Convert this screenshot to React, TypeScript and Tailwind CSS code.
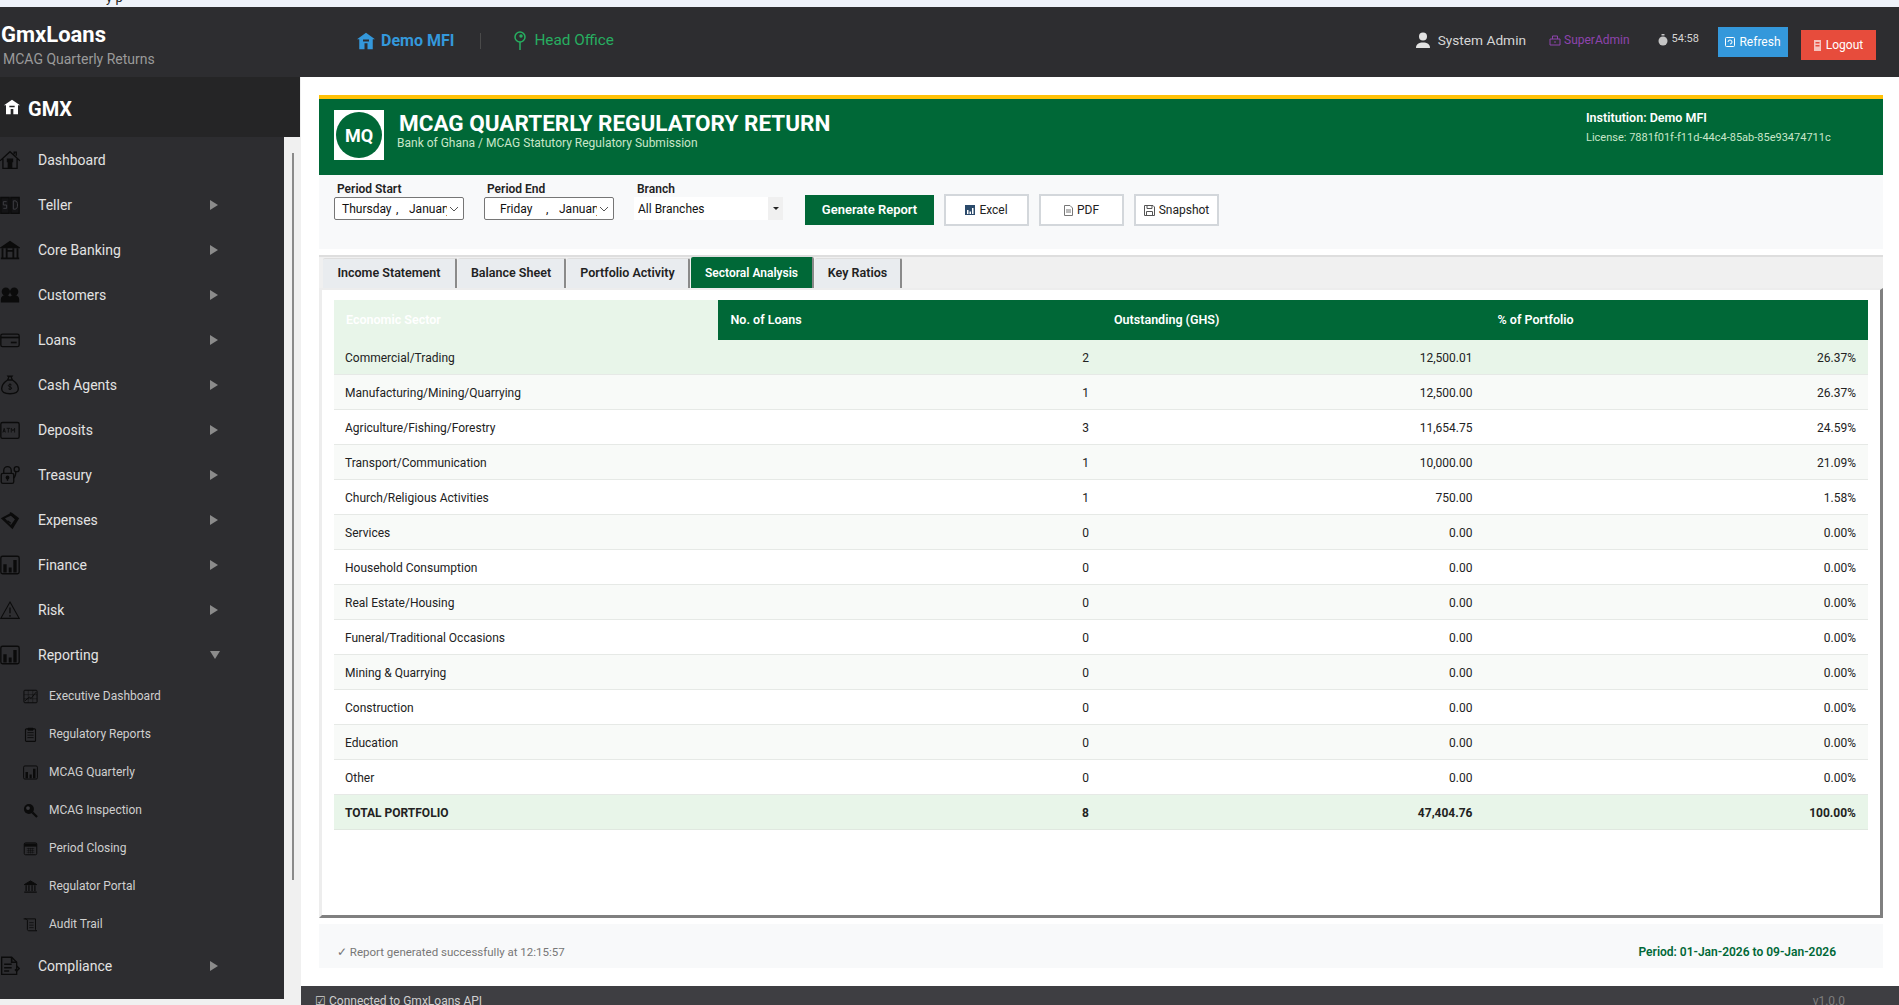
import type { ReactNode } from "react";

const ink = "#0b0b0b";

function Glyph({ size, children, className = "" }: { size: number; children: ReactNode; className?: string }) {
  return (
    <svg width={size} height={size} viewBox="0 0 24 24" fill="none" stroke={ink} strokeWidth="1.6" className={`shrink-0 ${className}`}>
      {children}
    </svg>
  );
}

const barChart = (
  <>
    <rect x="1" y="1.5" width="22" height="21" rx="2" />
    <path d="M4 21V11h4v10zM10.5 21v-6h3.5v6zM16 21V6h4v15z" fill={ink} stroke="none" />
  </>
);

const housePath = "M12 1 0 9.500H3V23h18V9.500h3zM8 10h8v2.500H8zM10 15h4v8h-4z";

const icons: Record<string, ReactNode> = {
  home: (
    <>
      <path d="M0 13 12 2l12 11M3.5 10.5V22h17V10.5M17 5V2.5h2.5V7" />
      <path d="M10 22v-7h4v7M9 11h6v3H9z" fill={ink} />
    </>
  ),
  teller: (
    <>
      <path d="M1 3h10v19H1zM13 3h10v19H13z" fill="#141416" />
      <path d="M8 8H4v4h4v4H4M16 7h2c2 0 3 2 3 5s-1 5-3 5h-2z" stroke="#3c3c40" strokeWidth="1.2" />
    </>
  ),
  bank: (
    <>
      <path d="M1.5 9 12 2l10.5 7z" fill={ink} />
      <path d="M3 10v11M21 10v11M8 10v11M16 10v11M1 22h22M8 13h8" strokeWidth="2.2" />
    </>
  ),
  users: (
    <>
      <circle cx="7" cy="8" r="5" fill={ink} stroke="none" />
      <circle cx="17" cy="8" r="5" fill={ink} stroke="none" />
      <path d="M1 21v-4c0-3 2.5-5 6-5 2 0 4 .8 5 2 1-1.2 3-2 5-2 3.500 0 6 2 6 5v4z" fill={ink} stroke="none" />
    </>
  ),
  card: (
    <>
      <rect x="1" y="5" width="22" height="15" rx="2" />
      <path d="M1 9h22" strokeWidth="2" />
      <path d="M13 15h7" strokeWidth="2" />
    </>
  ),
  money: (
    <>
      <path d="M9 6h6l-1.500-3 1-1.500h-5l1 1.500zM9 6C3 10 2 14 2 16.500 2 20.500 6 22.500 12 22.500s10-2 10-6c0-2.500-1-6.500-7-10.500z" />
      <path d="M12 10v8M14 12c-1-1-4-1-4 .8s4 1 4 3-3 1.500-4 .7" strokeWidth="1.1" />
    </>
  ),
  atm: (
    <>
      <rect x="1" y="3" width="22" height="19" rx="2" />
      <path d="M3.500 15 5 10l1.500 5M4 13.500h2M8 10h4M10 10v5M13.500 15v-5l2 3 2-3v5" strokeWidth="1" />
    </>
  ),
  lockKey: (
    <>
      <rect x="1.500" y="10" width="15" height="12" rx="2" />
      <path d="M4.500 10V6.500a4.500 4.500 0 0 1 9 0V10" />
      <circle cx="9" cy="15" r="1.500" fill={ink} />
      <path d="M9 15v4" />
      <circle cx="20" cy="5" r="3" />
      <path d="M19 8c0 4-.5 6-3 8" />
    </>
  ),
  tag: (
    <>
      <path d="M1 10 14 3l9 7-8 13z" fill={ink} stroke="none" />
      <path d="M6 10l7-3 5 4-5 7z" fill="#2d2d30" stroke="none" />
      <path d="M12 3l8 9M9 13l4 3" stroke="#0b0b0b" strokeWidth="1.400" />
    </>
  ),
  chart: barChart,
  warn: (
    <>
      <path d="M12 2.500 23 22H1z" strokeWidth="1.300" />
      <path d="M12 9v7M12 18v2" strokeWidth="1.600" />
    </>
  ),
  trend: (
    <>
      <rect x="1.500" y="2" width="21" height="20" rx="1.500" />
      <path d="M1.500 9h21M1.500 15.500h21M8.500 2v20M15.500 2v20" strokeWidth="0.7" />
      <path d="M3 19 10 13l3 2 8-10" strokeWidth="1.500" />
    </>
  ),
  clipboard: (
    <>
      <rect x="4" y="3" width="16" height="20" rx="1.500" strokeWidth="1.800" />
      <path d="M8 2h8v3H8z" fill={ink} />
      <path d="M7 9h10M7 13h10M7 17h10" strokeWidth="1.400" />
    </>
  ),
  search: (
    <>
      <circle cx="9.500" cy="9.500" r="8" fill={ink} stroke="none" />
      <circle cx="8" cy="8" r="3" fill="#3a3a3e" stroke="none" />
      <path d="M15 15l7.500 7.500" strokeWidth="3.500" />
    </>
  ),
  calendar: (
    <>
      <rect x="2" y="3" width="20" height="19" rx="2" />
      <path d="M2 4h20v5H2z" fill={ink} stroke="none" />
      <path d="M6 12h12M6 15h12M6 18h12M9 11v9M12 11v9M15 11v9" strokeWidth="0.8" />
    </>
  ),
  temple: (
    <>
      <path d="M2 9 12 3l10 6z" fill={ink} />
      <path d="M5 10v9M9.500 10v9M14.500 10v9M19 10v9M2 21h20" strokeWidth="2" />
    </>
  ),
  scroll: (
    <>
      <path d="M1 3h4l2 2v15c0 1 1 2 2 2h13c-1 0-2-1-2-2V3H3" />
      <path d="M10 9h7M10 13h7M10 17h7" strokeWidth="1.200" />
    </>
  ),
  doc: (
    <>
      <path d="M2 1.500h12l6 6V22H2z" />
      <path d="M5 10h9M5 14h9M5 18h6" strokeWidth="1.800" />
      <path d="M14 1.500v6h6M20 12l3 3-3 3-2-2" strokeWidth="2" />
    </>
  ),
};

const navItems = [
  { label: "Dashboard", icon: "home" },
  { label: "Teller", icon: "teller", arrow: true },
  { label: "Core Banking", icon: "bank", arrow: true },
  { label: "Customers", icon: "users", arrow: true },
  { label: "Loans", icon: "card", arrow: true },
  { label: "Cash Agents", icon: "money", arrow: true },
  { label: "Deposits", icon: "atm", arrow: true },
  { label: "Treasury", icon: "lockKey", arrow: true },
  { label: "Expenses", icon: "tag", arrow: true },
  { label: "Finance", icon: "chart", arrow: true },
  { label: "Risk", icon: "warn", arrow: true },
];

const reportingLinks = [
  { label: "Executive Dashboard", icon: "trend" },
  { label: "Regulatory Reports", icon: "clipboard" },
  { label: "MCAG Quarterly", icon: "chart" },
  { label: "MCAG Inspection", icon: "search" },
  { label: "Period Closing", icon: "calendar" },
  { label: "Regulator Portal", icon: "temple" },
  { label: "Audit Trail", icon: "scroll" },
];

const sectors = [
  ["Commercial/Trading", "2", "12,500.01", "26.37%"],
  ["Manufacturing/Mining/Quarrying", "1", "12,500.00", "26.37%"],
  ["Agriculture/Fishing/Forestry", "3", "11,654.75", "24.59%"],
  ["Transport/Communication", "1", "10,000.00", "21.09%"],
  ["Church/Religious Activities", "1", "750.00", "1.58%"],
  ["Services", "0", "0.00", "0.00%"],
  ["Household Consumption", "0", "0.00", "0.00%"],
  ["Real Estate/Housing", "0", "0.00", "0.00%"],
  ["Funeral/Traditional Occasions", "0", "0.00", "0.00%"],
  ["Mining & Quarrying", "0", "0.00", "0.00%"],
  ["Construction", "0", "0.00", "0.00%"],
  ["Education", "0", "0.00", "0.00%"],
  ["Other", "0", "0.00", "0.00%"],
];

const tabs = [
  { label: "Income Statement", width: "w-[134px]" },
  { label: "Balance Sheet", width: "w-[108px]" },
  { label: "Portfolio Activity", width: "w-[123px]" },
  { label: "Sectoral Analysis", width: "w-[123px]", active: true },
  { label: "Key Ratios", width: "w-[87px]" },
];

function NavRow({ label, icon, arrow, down }: { label: string; icon: string; arrow?: boolean; down?: boolean }) {
  return (
    <div className="flex h-[45px] items-center">
      <Glyph size={20}>{icons[icon]}</Glyph>
      <span className="ml-[18px] mt-[2px] w-[172px] text-[14px] text-[#e3e3e3]">{label}</span>
      {arrow && <span className="block h-0 w-0 border-y-[5px] border-l-[8px] border-y-transparent border-l-[#8b8b8b]" />}
      {down && <span className="block h-0 w-0 border-x-[5px] border-t-[8px] border-x-transparent border-t-[#8b8b8b]" />}
    </div>
  );
}

function DateBox({ day, indent }: { day: string; indent: string }) {
  return (
    <div className="flex h-[23px] w-[130px] items-center rounded-[2px] border border-[#767676] bg-white pl-[7px] text-[12px] text-[#111]">
      <span className={`w-[54px] ${indent}`}>{day}</span>
      <span className="w-[13px]">,</span>
      <span className="w-[38px] overflow-hidden whitespace-nowrap">January</span>
      <svg width="10" height="10" viewBox="0 0 10 10" fill="none" stroke="#555" className="ml-[2px]">
        <path d="M1 3l4 4 4-4" />
      </svg>
    </div>
  );
}

function OutlineButton({ label, width, children }: { label: string; width: string; children: ReactNode }) {
  return (
    <button className={`flex h-[32px] ${width} items-center justify-center gap-[4px] border-2 border-[#d3d7db] bg-white text-[12px] text-[#222]`}>
      {children}
      {label}
    </button>
  );
}

export default function App() {
  return (
    <div className="flex h-[1005px] w-[1899px] flex-col overflow-hidden bg-white font-['Roboto','Noto_Sans',sans-serif]">
      {/* clipped page text above the app */}
      <div className="h-[7px] overflow-hidden bg-[#eef2f9] pl-[106px] text-[13px] leading-[13px]">
        <div className="-mt-[9px] text-[#222]">y p</div>
      </div>

      <header className="flex h-[70px] bg-[#2d2d30]">
        <div className="w-[345px] pl-[1px] pt-[13px]">
          <div className="text-[22px] font-bold leading-[30px] text-white">GmxLoans</div>
          <div className="pl-[2px] text-[14px] leading-[18px] text-[#9a9a9a]">MCAG Quarterly Returns</div>
        </div>
        <div className="flex h-[67px] items-center">
          <svg width="18" height="18" viewBox="0 0 24 24" fill="#3498db" fillRule="evenodd" className="ml-[12px]">
            <path d={housePath} />
          </svg>
          <span className="ml-[6px] text-[16px] font-bold text-[#3498db]">Demo MFI</span>
          <span className="ml-[26px] h-[16px] w-px bg-[#4a4a4a]" />
          <svg width="16" height="20" viewBox="0 0 16 20" fill="none" stroke="#27ae60" strokeWidth="1.500" className="ml-[31px]">
            <circle cx="8" cy="6" r="5" />
            <circle cx="9" cy="5" r="1" fill="#27ae60" />
            <path d="M8 11v8" />
          </svg>
          <span className="ml-[6px] text-[15.300px] text-[#27ae60]">Head Office</span>
        </div>
        <div className="ml-auto flex pr-[23px]">
          <div className="flex h-[66px] items-center text-[13.700px] text-[#d6d6d6]">
            <svg width="14" height="16" viewBox="0 0 14 16" fill="#e2e2e2">
              <circle cx="7" cy="4.500" r="4" />
              <path d="M0 16c0-4 3-5.500 7-5.500s7 1.500 7 5.500z" />
            </svg>
            <span className="ml-[8px]">System Admin</span>
          </div>
          <div className="ml-[23px] flex h-[65px] items-center text-[12px] text-[#8e44ad]">
            <svg width="12" height="12" viewBox="0 0 12 12" fill="none" stroke="#8e44ad" className="mr-[3px]">
              <path d="M1 5h10v6H1zM3.500 5V2h5v3M6 7v2" />
            </svg>
            SuperAdmin
          </div>
          <div className="ml-[28px] flex h-[65px] items-center text-[11px] text-[#d6d6d6]">
            <svg width="10" height="12" viewBox="0 0 10 12" fill="#c4c4c4" className="mr-[4px]">
              <path d="M3.500 0h3v1.500h-3z" />
              <circle cx="5" cy="7" r="4.500" />
            </svg>
            54:58
          </div>
          <button className="ml-[19px] mt-[20px] flex h-[30px] w-[70px] items-center justify-center gap-[4px] bg-[#3498db] text-[12px] text-white">
            <svg width="10" height="10" viewBox="0 0 10 10" fill="none" stroke="white">
              <rect x="0.500" y="0.500" width="9" height="9" rx="1" />
              <path d="M3 5a2 2 0 1 1 2 2" />
            </svg>
            Refresh
          </button>
          <button className="ml-[13px] mt-[23px] flex h-[30px] w-[75px] items-center justify-center gap-[5px] bg-[#e74c3c] text-[12px] text-white">
            <svg width="7" height="11" viewBox="0 0 7 11" fill="#f6c2bc">
              <path d="M0 0h7v11H0zM1.500 2v1.500h4V2zM1.500 5v1.500h4V5z" fillRule="evenodd" />
            </svg>
            Logout
          </button>
        </div>
      </header>

      <div className="flex min-h-0 flex-1">
        <aside className="flex w-[300px] shrink-0 flex-col bg-[#f0f0f0]">
          <div className="flex h-[60px] shrink-0 items-center bg-[#252526] pl-[4px]">
            <svg width="16" height="16" viewBox="0 0 24 24" fill="white" fillRule="evenodd">
              <path d={housePath} />
            </svg>
            <span className="ml-[8px] mt-[3px] text-[20px] font-bold text-white">GMX</span>
          </div>
          <div className="flex h-[862px] shrink-0">
            <nav className="w-[284px] bg-[#2d2d30]">
              {navItems.map((item) => (
                <NavRow key={item.label} {...item} />
              ))}
              <NavRow label="Reporting" icon="chart" down />
              {reportingLinks.map((link) => (
                <div key={link.label} className="flex h-[38px] items-center pl-[23px]">
                  <Glyph size={15}>{icons[link.icon]}</Glyph>
                  <span className="ml-[11px] text-[12px] text-[#cfcfcf]">{link.label}</span>
                </div>
              ))}
              <NavRow label="Compliance" icon="doc" arrow />
            </nav>
            <div className="w-[16px] pl-[8px] pt-[16px]">
              <div className="h-[727px] w-[2px] bg-[#8a8a8a]" />
            </div>
          </div>
        </aside>

        <main className="flex min-w-0 flex-1 flex-col border-l border-[#f0f0f0] bg-white">
          <div className="flex-1 pl-[18px] pr-[16px] pt-[18px]">
            <section className="flex h-[80px] items-start border-t-4 border-[#ffc107] bg-[#006837] text-white">
              <div className="ml-[15px] mt-[11px] flex h-[50px] w-[50px] items-center justify-center bg-white">
                <div className="flex h-[46px] w-[46px] items-center justify-center rounded-full bg-[#006837] text-[18px] font-bold">MQ</div>
              </div>
              <div className="ml-[13px] mt-[12px]">
                <h1 className="ml-[2px] text-[22.500px] font-bold leading-[25px]">MCAG QUARTERLY REGULATORY RETURN</h1>
                <p className="text-[12px] leading-[14px] text-[#c8e6c9]">Bank of Ghana / MCAG Statutory Regulatory Submission</p>
              </div>
              <div className="ml-auto mr-[52px] mt-[10px] w-[245px]">
                <p className="text-[12.500px] font-semibold leading-[18px]">Institution: Demo MFI</p>
                <p className="mt-[3px] whitespace-nowrap text-[11px] leading-[16px] text-[#c8e6c9]">License: 7881f01f-f11d-44c4-85ab-85e93474711c</p>
              </div>
            </section>

            <section className="flex h-[74px] bg-[#f8f9fa] pl-[15px]">
              <div className="pt-[7px]">
                <label className="block pl-[3px] text-[12px] font-semibold leading-[15px] text-[#222]">Period Start</label>
                <DateBox day="Thursday" indent="" />
              </div>
              <div className="ml-[20px] pt-[7px]">
                <label className="block pl-[3px] text-[12px] font-semibold leading-[15px] text-[#222]">Period End</label>
                <DateBox day="Friday" indent="pl-[8px]" />
              </div>
              <div className="ml-[20px] pt-[7px]">
                <label className="block pl-[3px] text-[12px] font-semibold leading-[15px] text-[#222]">Branch</label>
                <div className="flex h-[23px] w-[149px] items-center bg-white pl-[4px] text-[12px] text-[#111]">
                  All Branches
                  <span className="ml-auto flex h-full w-[15px] items-center justify-center bg-[#f0f0f0]">
                    <span className="block h-0 w-0 border-x-[3px] border-t-[3px] border-x-transparent border-t-[#222]" />
                  </span>
                </div>
              </div>
              <div className="ml-[22px] flex gap-[10px] pt-[19px]">
                <button className="mt-px h-[30px] w-[129px] bg-[#006837] text-[13px] font-semibold text-white">Generate Report</button>
                <OutlineButton label="Excel" width="w-[85px]">
                  <svg width="10" height="10" viewBox="0 0 10 10" fill="#2b4a6b">
                    <path d="M0 0h10v10H0zM2 5v4h1.500V5zM4.500 6.500V9H6V6.500zM7 3v6h1.500V3z" fillRule="evenodd" />
                  </svg>
                </OutlineButton>
                <OutlineButton label="PDF" width="w-[85px]">
                  <svg width="9" height="11" viewBox="0 0 9 11" fill="none" stroke="#777">
                    <path d="M.5.5h5.500l2.500 2.500v7.500h-8zM2 5h5M2 7h5" />
                  </svg>
                </OutlineButton>
                <OutlineButton label="Snapshot" width="w-[85px]">
                  <svg width="11" height="11" viewBox="0 0 11 11" fill="none" stroke="#555">
                    <path d="M.5.5h8.500l1.500 1.500v8.500H.5zM3 .5v3h5v-3M2.500 10.500V6.500h6v4" />
                  </svg>
                </OutlineButton>
              </div>
            </section>

            <section className="mt-[6px] flex h-[663px] flex-col">
              <div className="flex h-[33px] shrink-0 items-end gap-px border-t-2 border-[#dedede] bg-[#f0f0f0] pl-[4px]">
                {tabs.map((tab) => (
                  <div
                    key={tab.label}
                    className={`flex h-[30px] items-center justify-center rounded-t-[2px] border-r-2 border-[#8a8a8a] font-semibold ${tab.width} ${
                      tab.active ? "h-[31px] bg-[#006837] text-[12px] text-white" : "border-t border-t-[#dedede] bg-[#e9ecef] text-[12.500px] text-[#222]"
                    }`}
                  >
                    {tab.label}
                  </div>
                ))}
              </div>
              <div className="h-[630px] border-b-[3px] border-l-[3px] border-r-[3px] border-t-2 border-[#ededed] border-b-[#808080] border-r-[#808080] bg-white pl-[12px] pr-[12px] pt-[10px]">
                <table className="w-full table-fixed border-collapse text-[12px] text-[#222]">
                  <thead>
                    <tr className="h-[40px] text-left text-[12.500px] text-white">
                      <th className="bg-[#e8f5e9] pl-[12px] font-semibold">Economic Sector</th>
                      <th className="bg-[#006837] pl-[13px] font-semibold">No. of Loans</th>
                      <th className="bg-[#006837] pl-[13px] font-semibold">Outstanding (GHS)</th>
                      <th className="bg-[#006837] pl-[13px] font-semibold">% of Portfolio</th>
                    </tr>
                  </thead>
                  <tbody>
                    {sectors.map((row, index) => (
                      <tr key={row[0]} className={`h-[34.950px] border-b border-[#e6e9e6] ${index === 0 ? "bg-[#e8f5e9]" : index % 2 === 1 ? "bg-[#f8faf8]" : "bg-white"}`}>
                        <td className="pl-[11px] pt-[2px]">{row[0]}</td>
                        <td className="pr-[12px] pt-[2px] text-right">{row[1]}</td>
                        <td className="pr-[12px] pt-[2px] text-right">{row[2]}</td>
                        <td className="pr-[12px] pt-[2px] text-right">{row[3]}</td>
                      </tr>
                    ))}
                    <tr className="h-[35px] border-b border-[#e0e8e0] bg-[#e8f5e9] font-bold">
                      <td className="pl-[11px] pt-[2px]">TOTAL PORTFOLIO</td>
                      <td className="pr-[12px] pt-[2px] text-right">8</td>
                      <td className="pr-[12px] pt-[2px] text-right">47,404.76</td>
                      <td className="pr-[12px] pt-[2px] text-right">100.00%</td>
                    </tr>
                  </tbody>
                </table>
              </div>
            </section>

            <section className="mt-[6px] flex h-[44px] items-end justify-between bg-[#f8f9fa] pb-[7px] pl-[18px] pr-[47px] text-[12px]">
              <span className="text-[11.500px] text-[#777]">✓ Report generated successfully at 12:15:57</span>
              <span className="font-semibold text-[#006837]">Period: 01-Jan-2026 to 09-Jan-2026</span>
            </section>
          </div>
          <footer className="flex h-[19px] shrink-0 items-start justify-between overflow-hidden bg-[#3e3e42] pl-[14px] pr-[54px] pt-[8px] text-[12px] leading-[14px]">
            <span className="text-[#d0d0d0]">☑ Connected to GmxLoans API</span>
            <span className="text-[#7d7d7d]">v1.0.0</span>
          </footer>
        </main>
      </div>
    </div>
  );
}
